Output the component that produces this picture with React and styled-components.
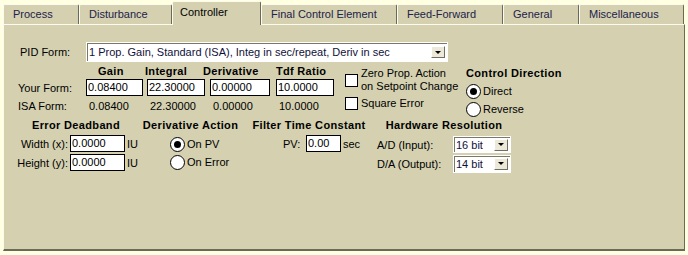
import React from 'react'
import styled, { createGlobalStyle } from 'styled-components'

const Global = createGlobalStyle`
  body {
    margin: 0;
    background: #ffffe1;
    font-family: "Liberation Sans", Arial, sans-serif;
    font-size: 11px;
    color: #000;
  }
`

const FACE = '#d4d0b0'
const LIGHT = '#fbfbef'
const DARK = '#6b6a58'

const Screen = styled.div`
  width: 688px;
  height: 255px;
  overflow: hidden;
`

const TabBar = styled.div`
  display: flex;
  align-items: flex-end;
  height: 24px;
  padding-left: 3px;
`

const Tab = styled.div`
  box-sizing: border-box;
  display: flex;
  align-items: center;
  width: ${p => p.$w}px;
  height: ${p => (p.$active ? 24 : 20)}px;
  padding-left: ${p => (p.$active ? 7 : 9)}px;
  padding-bottom: ${p => (p.$active ? 4 : 1)}px;
  background: ${FACE};
  border-top: 1px solid ${LIGHT};
  border-left: 1px solid ${LIGHT};
  border-right: 1px solid ${DARK};
  border-radius: 2px 2px 0 0;
  color: ${p => (p.$active ? '#000' : '#22224a')};
  white-space: nowrap;
  ${p => p.$active && 'position: relative; z-index: 1; margin-bottom: -1px;'}
`

const Panel = styled.div`
  box-sizing: border-box;
  margin-left: 3px;
  width: 682px;
  height: 227px;
  padding: 17px 0 0 10px;
  background: ${FACE};
  border-top: 1px solid ${LIGHT};
  border-left: 1px solid ${LIGHT};
  border-right: 1px solid ${DARK};
  border-bottom: 2px solid ${DARK};
`

const PidRow = styled.div`
  display: flex;
  align-items: center;
  height: 20px;
  padding-left: 6px;
`

const RowLabel = styled.div`
  width: ${p => p.$w}px;
  flex-shrink: 0;
  white-space: nowrap;
  text-align: ${p => (p.$right ? 'right' : 'left')};
  padding-right: ${p => (p.$right ? 2 : 0)}px;
  box-sizing: border-box;
`

const Dropdown = styled.div`
  box-sizing: border-box;
  display: flex;
  align-items: center;
  width: ${p => p.$w}px;
  height: ${p => p.$h}px;
  background: #fff;
  border: 1px solid #fff;
  box-shadow: inset 1px 1px 0 #7a7866;
  padding: 0 2px 0 2px;
  color: #10103a;
  white-space: nowrap;
`

const DropText = styled.span`
  flex: 1;
  overflow: hidden;
`

const DropButton = styled.span`
  box-sizing: border-box;
  width: 14px;
  height: 12px;
  display: flex;
  align-items: center;
  justify-content: center;
  background: #ece9d8;
  border-top: 1px solid #fff;
  border-left: 1px solid #fff;
  border-right: 1px solid #716f64;
  border-bottom: 1px solid #716f64;

  &::after {
    content: '';
    border-left: 3px solid transparent;
    border-right: 3px solid transparent;
    border-top: 3px solid #000;
  }
`

const Middle = styled.div`
  display: flex;
  padding-left: 4px;
  height: 56px;
`

const GainGrid = styled.div`
  display: grid;
  grid-template-columns: 68px 61px 63px 66px 59px;
  grid-template-rows: 17px 18px 17px;
  align-items: center;
`

const ColHead = styled.div`
  font-weight: bold;
  letter-spacing: 0.3px;
  margin-left: ${p => p.$shift || 0}px;
  white-space: nowrap;
`

const TextBox = styled.div`
  box-sizing: border-box;
  width: ${p => p.$w}px;
  height: 17px;
  line-height: 15px;
  padding-left: 1px;
  background: #fff;
  border: 1px solid #000;
  color: #000;
  white-space: nowrap;
  overflow: hidden;
  align-self: ${p => (p.$top ? 'start' : 'center')};
`

const IsaValue = styled.div`
  padding-left: 3px;
`

const Options = styled.div`
  display: flex;
  flex-direction: column;
  margin-left: 10px;
  padding-top: 5px;
  width: 121px;
`

const CheckRow = styled.div`
  display: flex;
  align-items: center;
  gap: 3px;
  margin-top: ${p => p.$gap || 0}px;
  line-height: 13px;
`

const CheckBox = styled.span`
  box-sizing: border-box;
  width: 13px;
  height: 13px;
  flex-shrink: 0;
  background: #fff;
  border: 1px solid #000;
`

const Column = styled.div`
  display: flex;
  flex-direction: column;
  width: ${p => p.$w}px;
  margin-left: ${p => p.$ml || 0}px;
  padding-top: ${p => p.$pt || 0}px;
`

const Heading = styled.div`
  font-weight: bold;
  letter-spacing: 0.35px;
  white-space: nowrap;
  line-height: 14px;
  height: ${p => p.$h || 14}px;
  text-align: ${p => (p.$center ? 'center' : 'left')};
`

const RadioRow = styled.div`
  display: flex;
  align-items: center;
  gap: 2px;
  height: 18px;
  padding-left: ${p => p.$pl || 0}px;
`

const Radio = styled.span`
  box-sizing: border-box;
  width: 15px;
  height: 15px;
  flex-shrink: 0;
  border-radius: 50%;
  background: #fff;
  border: 1px solid #000;
  display: flex;
  align-items: center;
  justify-content: center;

  &::after {
    content: '';
    display: ${p => (p.$on ? 'block' : 'none')};
    width: 7px;
    height: 7px;
    border-radius: 50%;
    background: #000;
  }
`

const Bottom = styled.div`
  display: flex;
  height: 56px;
`

const FieldGrid = styled.div`
  display: grid;
  grid-template-columns: ${p => p.$cols};
  grid-auto-rows: 17px;
  row-gap: 2px;
  align-items: center;
`

const Unit = styled.div`
  padding-left: ${p => p.$pl || 2}px;
`

const InlineRow = styled.div`
  display: flex;
  align-items: center;
  height: 17px;
  padding-left: ${p => p.$pl || 0}px;
`

const tabs = [
  ['Process', 76],
  ['Disturbance', 93],
  ['Controller', 89],
  ['Final Control Element', 136],
  ['Feed-Forward', 106],
  ['General', 76],
  ['Miscellaneous', 105],
]

const heads = [
  ['Gain', 12],
  ['Integral', -2],
  ['Derivative', -7],
  ['Tdf Ratio', 0],
]

const gains = [
  ['0.08400', 57],
  ['22.30000', 58],
  ['0.00000', 60],
  ['10.0000', 58],
]

const Select = ({ w, h, children }) => (
  <Dropdown $w={w} $h={h}>
    <DropText>{children}</DropText>
    <DropButton />
  </Dropdown>
)

const App = () => (
  <Screen>
    <Global />
    <TabBar>
      {tabs.map(([name, w]) => (
        <Tab key={name} $w={w} $active={name === 'Controller'}>
          {name}
        </Tab>
      ))}
    </TabBar>
    <Panel>
      <PidRow>
        <RowLabel $w={66}>PID Form:</RowLabel>
        <Select w={362} h={20}>
          1 Prop. Gain, Standard (ISA), Integ in sec/repeat, Deriv in sec
        </Select>
      </PidRow>

      <Middle>
        <GainGrid>
          <div />
          {heads.map(([h, s]) => (
            <ColHead key={h} $shift={s}>
              {h}
            </ColHead>
          ))}
          <RowLabel $w={68}>Your Form:</RowLabel>
          {gains.map(([v, w]) => (
            <TextBox key={v + w} $w={w} $top>
              {v}
            </TextBox>
          ))}
          <RowLabel $w={68}>ISA Form:</RowLabel>
          {gains.map(([v, w]) => (
            <IsaValue key={v + w}>{v}</IsaValue>
          ))}
        </GainGrid>

        <Options>
          <CheckRow>
            <CheckBox />
            <div>
              Zero Prop. Action
              <br />
              on Setpoint Change
            </div>
          </CheckRow>
          <CheckRow $gap={4}>
            <CheckBox />
            <div>Square Error</div>
          </CheckRow>
        </Options>

        <Column $w={120} $pt={4}>
          <Heading $h={16}>Control Direction</Heading>
          <RadioRow>
            <Radio $on />
            Direct
          </RadioRow>
          <RadioRow>
            <Radio />
            Reverse
          </RadioRow>
        </Column>
      </Middle>

      <Bottom>
        <Column $w={124}>
          <Heading $h={17} $center>
            Error Deadband
          </Heading>
          <FieldGrid $cols="56px 55px auto">
            <RowLabel $w={56} $right>
              Width (x):
            </RowLabel>
            <TextBox $w={55}>0.0000</TextBox>
            <Unit>IU</Unit>
            <RowLabel $w={56} $right>
              Height (y):
            </RowLabel>
            <TextBox $w={55}>0.0000</TextBox>
            <Unit>IU</Unit>
          </FieldGrid>
        </Column>

        <Column $w={99} $ml={3}>
          <Heading $h={17} $center>
            Derivative Action
          </Heading>
          <RadioRow $pl={29}>
            <Radio $on />
            On PV
          </RadioRow>
          <RadioRow $pl={29}>
            <Radio />
            On Error
          </RadioRow>
        </Column>

        <Column $w={114} $ml={12}>
          <Heading $h={17} $center>
            Filter Time Constant
          </Heading>
          <InlineRow $pl={31}>
            <RowLabel $w={23}>PV:</RowLabel>
            <TextBox $w={35}>0.00</TextBox>
            <Unit>sec</Unit>
          </InlineRow>
        </Column>

        <Column $w={134} $ml={11}>
          <Heading $h={18} $center>
            Hardware Resolution
          </Heading>
          <FieldGrid $cols="76px 58px">
            <RowLabel $w={76}>A/D (Input):</RowLabel>
            <Select w={58} h={17}>
              16 bit
            </Select>
            <RowLabel $w={76}>D/A (Output):</RowLabel>
            <Select w={58} h={18}>
              14 bit
            </Select>
          </FieldGrid>
        </Column>
      </Bottom>
    </Panel>
  </Screen>
)

export default App
